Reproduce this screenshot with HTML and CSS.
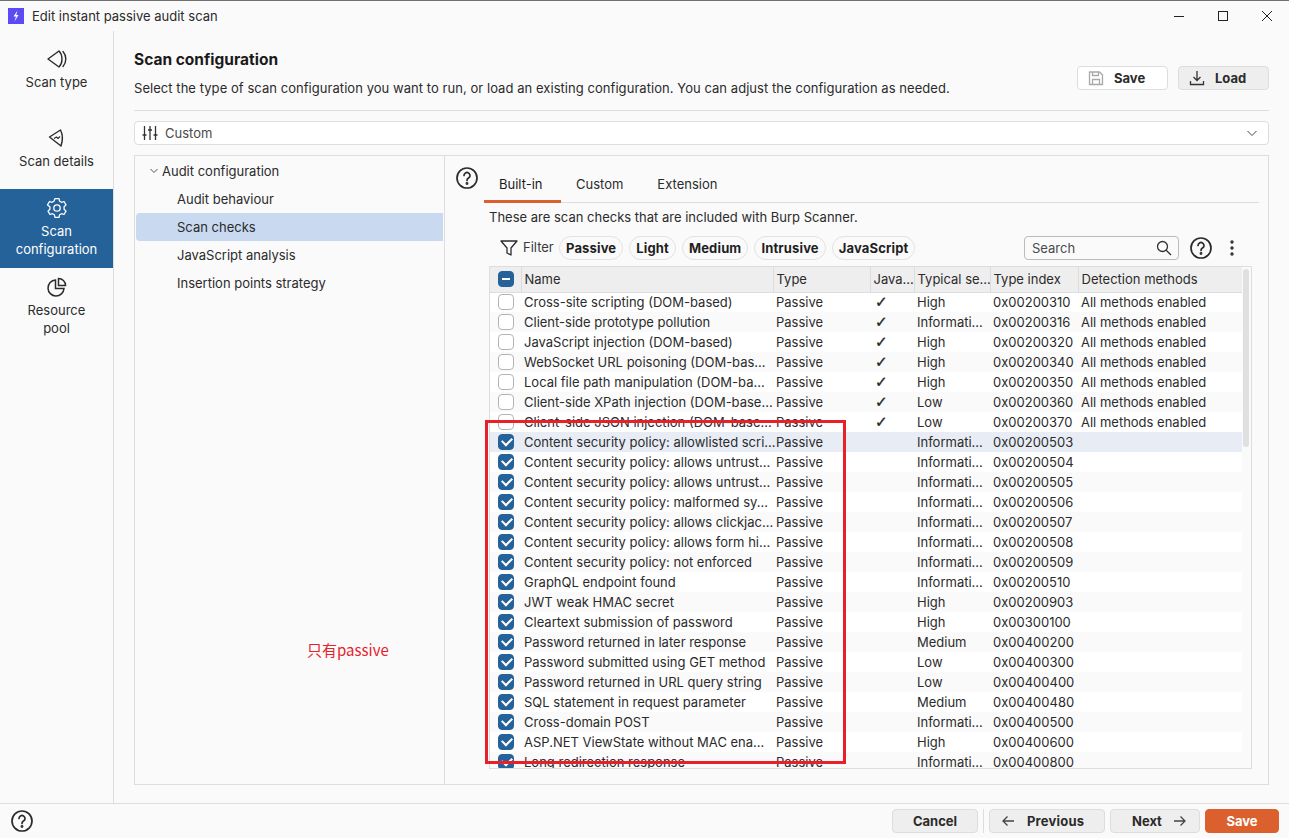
FILE: index.html
```html
<!DOCTYPE html>
<html lang="en">
<head>
  <meta charset="UTF-8">
  <title>Edit instant passive audit scan</title>
  <link rel="stylesheet" href="styles.css">
</head>
<body>

<header class="titlebar">
  <svg class="app-icon" width="16" height="16" viewBox="0 0 16 16"><rect width="16" height="16" fill="#5b4bf5"/><path d="M9.500 2.500 5.500 8.500H8L6.500 13.500 10.500 7H8.200z" fill="#fff"/></svg>
  <span class="title">Edit instant passive audit scan</span>
  <div class="win-controls">
    <svg width="12" height="12" viewBox="0 0 12 12"><path d="M1 6.500h10" stroke="#222" fill="none"/></svg>
    <svg width="12" height="12" viewBox="0 0 12 12"><rect x="1.500" y="1.500" width="9" height="9" stroke="#222" fill="none"/></svg>
    <svg width="12" height="12" viewBox="0 0 12 12"><path d="M1 1l10 10M11 1 1 11" stroke="#222" fill="none"/></svg>
  </div>
</header>

<div class="main">
  <nav class="sidebar">
    <div class="nav-item">
      <svg width="24" height="24" viewBox="0 0 24 24" fill="none" stroke="#2b2b2b" stroke-width="1.400"><path d="M3 12 14 4c2 2 3 5 3 8s-1 6-3 8z" stroke-linejoin="round"/><path d="M18 4.500c1.800 2 2.800 4.800 2.800 7.500s-1 5.500-2.800 7.500" stroke-linecap="round"/></svg>
      <span>Scan type</span>
    </div>
    <div class="nav-item">
      <svg width="24" height="24" viewBox="0 0 24 24" fill="none" stroke="#2b2b2b" stroke-width="1.400" stroke-linejoin="round"><path d="M4.500 11 15.500 4c2 4 2.500 10 .5 16z"/><path d="M9 12.500l2.500-1.500 1.500 1.500 2-2" stroke-width="1.100"/></svg>
      <span>Scan details</span>
    </div>
    <div class="nav-item active">
      <svg width="24" height="24" viewBox="0 0 24 24" fill="none" stroke="#fff" stroke-width="1.300" stroke-linejoin="round"><circle cx="12" cy="12" r="3.200"/><path d="M10 2.600h4l.6 2.600 1.900 1.100 2.500-.8 2 3.400-1.900 1.800v2.600l1.900 1.800-2 3.400-2.500-.8-1.900 1.100-.6 2.600h-4l-.6-2.600-1.900-1.100-2.500.8-2-3.400 1.900-1.800v-2.600L2.500 8.900l2-3.400 2.500.8 1.900-1.100z"/></svg>
      <span>Scan<br>configuration</span>
    </div>
    <div class="nav-item">
      <svg width="24" height="24" viewBox="0 0 24 24" fill="none" stroke="#2b2b2b" stroke-width="1.500"><path d="M10.500 5a8 8 0 1 0 8.500 8.500h-8.500z"/><path d="M13.500 3.500a7 7 0 0 1 7 7h-7z"/></svg>
      <span>Resource<br>pool</span>
    </div>
  </nav>

  <main class="content">
    <div class="head">
      <div class="head-text">
        <h1>Scan configuration</h1>
        <p>Select the type of scan configuration you want to run, or load an existing configuration. You can adjust the configuration as needed.</p>
      </div>
      <div class="head-buttons">
        <button class="btn plain">
          <svg width="16" height="16" viewBox="0 0 16 16" fill="none" stroke="#a8a8a8" stroke-width="1.300"><path d="M1.500 2h10l3 3v9.500h-13z" stroke-linejoin="round"/><path d="M4.500 2v3.500h6V2M4.500 14.500V9.500h7v5"/></svg>
          Save
        </button>
        <button class="btn">
          <svg width="16" height="16" viewBox="0 0 16 16" fill="none" stroke="#333" stroke-width="1.300"><path d="M8 1v9.500M4.500 7 8 10.500 11.500 7M1.500 11v3.500h13V11"/></svg>
          Load
        </button>
      </div>
    </div>

    <div class="combo">
      <svg width="16" height="16" viewBox="0 0 16 16" fill="none" stroke="#333" stroke-width="1.300"><path d="M2.500 1v14M8 1v14M13.500 1v14M.5 10h4M6 5h4M11.500 10h4"/></svg>
      <span>Custom</span>
      <svg class="combo-arrow" width="12" height="12" viewBox="0 0 12 12" fill="none" stroke="#444"><path d="M1.500 4 6 8.500 10.500 4"/></svg>
    </div>

    <div class="panel">
      <div class="tree">
        <div class="tree-row root">
          <svg width="10" height="10" viewBox="0 0 10 10" fill="none" stroke="#555"><path d="M1.500 3 5 6.500 8.500 3"/></svg>
          Audit configuration
        </div>
        <div class="tree-row">Audit behaviour</div>
        <div class="tree-row selected">Scan checks</div>
        <div class="tree-row">JavaScript analysis</div>
        <div class="tree-row">Insertion points strategy</div>
      </div>

      <div class="checks">
        <div class="tabs-row">
          <svg class="help" width="24" height="24" viewBox="0 0 24 24" fill="none" stroke="#2b2b2b" stroke-width="1.700"><circle cx="12" cy="12" r="10"/><path d="M9 9.500a3 3 0 1 1 4.500 2.600c-1 .6-1.500 1.100-1.500 2.400" stroke-linecap="round"/><circle cx="12" cy="17.500" r=".6"/></svg>
          <div class="tabs">
            <div class="tab current">Built-in</div>
            <div class="tab">Custom</div>
            <div class="tab">Extension</div>
          </div>
        </div>
        <p class="note">These are scan checks that are included with Burp Scanner.</p>

        <div class="filters">
          <svg class="funnel" width="18" height="18" viewBox="0 0 18 18" fill="none" stroke="#2b2b2b" stroke-width="1.300" stroke-linejoin="round"><path d="M1 2h16l-6 7v7l-4-2V9z"/></svg>
          <span class="filter-label">Filter</span>
          <span class="pill">Passive</span>
          <span class="pill">Light</span>
          <span class="pill">Medium</span>
          <span class="pill">Intrusive</span>
          <span class="pill">JavaScript</span>
          <div class="search">
            <span>Search</span>
            <svg width="16" height="16" viewBox="0 0 16 16" fill="none" stroke="#333" stroke-width="1.300"><circle cx="6.500" cy="6.500" r="5"/><path d="m10.200 10.200 4.800 4.800"/></svg>
          </div>
          <svg class="help-small" width="24" height="24" viewBox="0 0 24 24" fill="none" stroke="#2b2b2b" stroke-width="1.700"><circle cx="12" cy="12" r="10"/><path d="M9 9.500a3 3 0 1 1 4.500 2.600c-1 .6-1.500 1.100-1.500 2.400" stroke-linecap="round"/><circle cx="12" cy="17.500" r=".6"/></svg>
          <svg class="kebab" width="4" height="16" viewBox="0 0 4 16" fill="#333"><circle cx="2" cy="2" r="1.700"/><circle cx="2" cy="8" r="1.700"/><circle cx="2" cy="14" r="1.700"/></svg>
        </div>

        <div class="table-wrap">
          <table>
            <colgroup>
              <col class="c-check"><col class="c-name"><col class="c-type"><col class="c-java"><col class="c-sev"><col class="c-index"><col>
            </colgroup>
            <thead>
              <tr><th><span class="cb mixed"></span></th><th>Name</th><th>Type</th><th>Java...</th><th>Typical se...</th><th>Type index</th><th>Detection methods</th></tr>
            </thead>
            <tbody>
              <tr><td><span class="cb"></span></td><td>Cross-site scripting (DOM-based)</td><td>Passive</td><td class="tick">✓</td><td>High</td><td>0x00200310</td><td>All methods enabled</td></tr>
              <tr><td><span class="cb"></span></td><td>Client-side prototype pollution</td><td>Passive</td><td class="tick">✓</td><td>Informati...</td><td>0x00200316</td><td>All methods enabled</td></tr>
              <tr><td><span class="cb"></span></td><td>JavaScript injection (DOM-based)</td><td>Passive</td><td class="tick">✓</td><td>High</td><td>0x00200320</td><td>All methods enabled</td></tr>
              <tr><td><span class="cb"></span></td><td>WebSocket URL poisoning (DOM-bas...</td><td>Passive</td><td class="tick">✓</td><td>High</td><td>0x00200340</td><td>All methods enabled</td></tr>
              <tr><td><span class="cb"></span></td><td>Local file path manipulation (DOM-ba...</td><td>Passive</td><td class="tick">✓</td><td>High</td><td>0x00200350</td><td>All methods enabled</td></tr>
              <tr><td><span class="cb"></span></td><td>Client-side XPath injection (DOM-base...</td><td>Passive</td><td class="tick">✓</td><td>Low</td><td>0x00200360</td><td>All methods enabled</td></tr>
              <tr><td><span class="cb"></span></td><td>Client-side JSON injection (DOM-base...</td><td>Passive</td><td class="tick">✓</td><td>Low</td><td>0x00200370</td><td>All methods enabled</td></tr>
              <tr class="hl"><td><span class="cb on"></span></td><td>Content security policy: allowlisted scri...</td><td>Passive</td><td></td><td>Informati...</td><td>0x00200503</td><td></td></tr>
              <tr><td><span class="cb on"></span></td><td>Content security policy: allows untrust...</td><td>Passive</td><td></td><td>Informati...</td><td>0x00200504</td><td></td></tr>
              <tr><td><span class="cb on"></span></td><td>Content security policy: allows untrust...</td><td>Passive</td><td></td><td>Informati...</td><td>0x00200505</td><td></td></tr>
              <tr><td><span class="cb on"></span></td><td>Content security policy: malformed sy...</td><td>Passive</td><td></td><td>Informati...</td><td>0x00200506</td><td></td></tr>
              <tr><td><span class="cb on"></span></td><td>Content security policy: allows clickjac...</td><td>Passive</td><td></td><td>Informati...</td><td>0x00200507</td><td></td></tr>
              <tr><td><span class="cb on"></span></td><td>Content security policy: allows form hi...</td><td>Passive</td><td></td><td>Informati...</td><td>0x00200508</td><td></td></tr>
              <tr><td><span class="cb on"></span></td><td>Content security policy: not enforced</td><td>Passive</td><td></td><td>Informati...</td><td>0x00200509</td><td></td></tr>
              <tr><td><span class="cb on"></span></td><td>GraphQL endpoint found</td><td>Passive</td><td></td><td>Informati...</td><td>0x00200510</td><td></td></tr>
              <tr><td><span class="cb on"></span></td><td>JWT weak HMAC secret</td><td>Passive</td><td></td><td>High</td><td>0x00200903</td><td></td></tr>
              <tr><td><span class="cb on"></span></td><td>Cleartext submission of password</td><td>Passive</td><td></td><td>High</td><td>0x00300100</td><td></td></tr>
              <tr><td><span class="cb on"></span></td><td>Password returned in later response</td><td>Passive</td><td></td><td>Medium</td><td>0x00400200</td><td></td></tr>
              <tr><td><span class="cb on"></span></td><td>Password submitted using GET method</td><td>Passive</td><td></td><td>Low</td><td>0x00400300</td><td></td></tr>
              <tr><td><span class="cb on"></span></td><td>Password returned in URL query string</td><td>Passive</td><td></td><td>Low</td><td>0x00400400</td><td></td></tr>
              <tr><td><span class="cb on"></span></td><td>SQL statement in request parameter</td><td>Passive</td><td></td><td>Medium</td><td>0x00400480</td><td></td></tr>
              <tr><td><span class="cb on"></span></td><td>Cross-domain POST</td><td>Passive</td><td></td><td>Informati...</td><td>0x00400500</td><td></td></tr>
              <tr><td><span class="cb on"></span></td><td>ASP.NET ViewState without MAC ena...</td><td>Passive</td><td></td><td>High</td><td>0x00400600</td><td></td></tr>
              <tr><td><span class="cb on"></span></td><td>Long redirection response</td><td>Passive</td><td></td><td>Informati...</td><td>0x00400800</td><td></td></tr>
            </tbody>
          </table>
          <div class="scrollbar"></div>
        </div>
      </div>
    </div>
  </main>
</div>

<footer class="footer">
  <svg class="help" width="24" height="24" viewBox="0 0 24 24" fill="none" stroke="#2b2b2b" stroke-width="1.700"><circle cx="12" cy="12" r="10"/><path d="M9 9.500a3 3 0 1 1 4.500 2.600c-1 .6-1.500 1.100-1.500 2.400" stroke-linecap="round"/><circle cx="12" cy="17.500" r=".6"/></svg>
  <div class="foot-buttons">
    <button class="btn cancel">Cancel</button>
    <span class="foot-sep"></span>
    <button class="btn prev">
      <svg width="14" height="14" viewBox="0 0 14 14" fill="none" stroke="#444" stroke-width="1.300"><path d="M13 7H2M6.500 2.500 2 7l4.500 4.500"/></svg>
      Previous
    </button>
    <button class="btn next">
      Next
      <svg width="14" height="14" viewBox="0 0 14 14" fill="none" stroke="#444" stroke-width="1.300"><path d="M1 7h11M7.500 2.500 12 7l-4.500 4.500"/></svg>
    </button>
    <button class="btn primary">Save</button>
  </div>
</footer>

<!-- red markup drawn over the screenshot -->
<div class="mark-box"></div>
<div class="mark-text">只有passive</div>

</body>
</html>
```

FILE: styles.css
```css
* {
  box-sizing: border-box;
}

html, body {
  height: 100%;
}

body {
  margin: 0;
  display: flex;
  flex-direction: column;
  height: 838px;
  overflow: hidden;
  position: relative;
  background: #fafafa;
  color: #2b2b2b;
  font-family: Inter, "Noto Sans", sans-serif;
  font-size: 13px;
  border-top: 1px solid #707070;
}

.titlebar {
  display: flex;
  align-items: center;
  height: 30px;
  padding-left: 8px;
  flex: none;
}

.title {
  margin-left: 8px;
}

.win-controls {
  display: flex;
  gap: 32px;
  margin-left: auto;
  padding-right: 16px;
}

.main {
  flex: 1;
  display: flex;
  min-height: 0;
}

.sidebar {
  width: 114px;
  flex: none;
  border-right: 1px solid #dddddd;
}

.nav-item {
  height: 79px;
  padding-bottom: 3px;
  display: flex;
  flex-direction: column;
  align-items: center;
  justify-content: center;
  text-align: center;
  line-height: 18px;
}

.nav-item svg {
  margin-bottom: 2px;
}

.nav-item.active {
  background: #256299;
  color: #fff;
}

.content {
  flex: 1;
  min-width: 0;
  padding: 0 20px 18px;
  display: flex;
  flex-direction: column;
}

.head {
  display: flex;
  justify-content: space-between;
  height: 80px;
  border-bottom: 1px solid #dddddd;
}

h1 {
  margin: 19px 0 0;
  font-size: 15.500px;
  line-height: 20px;
  font-weight: 700;
  color: #1a1a1a;
}

.head-text p {
  margin: 8px 0 0;
  line-height: 20px;
  letter-spacing: .05px;
}

.head-buttons {
  display: flex;
  gap: 10px;
  padding-top: 35px;
}

.btn {
  display: flex;
  align-items: center;
  justify-content: center;
  gap: 12px;
  height: 24px;
  padding: 0;
  border: 1px solid #dddddd;
  border-radius: 4px;
  background: #eeeeee;
  color: #2b2b2b;
  font-family: inherit;
  font-size: 13px;
  font-weight: 700;
}

.head-buttons .btn {
  width: 91px;
  justify-content: flex-start;
  padding-left: 10px;
  gap: 10px;
}

.btn.plain {
  background: #fff;
}

.combo {
  display: flex;
  align-items: center;
  gap: 7px;
  height: 24px;
  margin-top: 10px;
  padding: 0 10px 0 7px;
  background: #fff;
  border: 1px solid #dddddd;
  border-radius: 4px;
  color: #4a4a4a;
}

.combo-arrow {
  margin-left: auto;
}

.panel {
  flex: 1;
  min-height: 0;
  display: flex;
  margin-top: 10px;
  border: 1px solid #dddddd;
}

.tree {
  width: 310px;
  flex: none;
  padding: 1px 1px;
  border-right: 1px solid #dddddd;
}

.tree-row {
  display: flex;
  align-items: center;
  height: 28px;
  padding-left: 41px;
  border-radius: 4px 0 0 4px;
}

.tree-row.root {
  padding-left: 13px;
  gap: 3px;
}

.tree-row.selected {
  background: #c8d9f0;
}

.checks {
  flex: 1;
  min-width: 0;
  display: flex;
  flex-direction: column;
  padding: 0 9px 15px 10px;
}

.tabs-row {
  display: flex;
  align-items: flex-start;
  height: 47px;
  flex: none;
}

.help {
  flex: none;
  margin-top: 10px;
}

.tabs {
  flex: 1;
  display: flex;
  height: 47px;
  margin-left: 5px;
  border-bottom: 1px solid #dddddd;
}

.tab {
  height: 47px;
  padding: 19px 15px 0;
  line-height: 18px;
  margin-right: 4px;
}

.tab.current {
  width: 77px;
  margin-right: 0;
  border-bottom: 3px solid #dc602e;
  color: #1a1a1a;
}

.note {
  margin: 4px 0 0 34px;
  line-height: 20px;
}

.filters {
  display: flex;
  align-items: center;
  height: 24px;
  margin: 9px 7px 0 34px;
  gap: 6px;
  flex: none;
}

.funnel {
  margin-left: 11px;
}

.filter-label {
  margin: -2px 0 0 -1px;
  width: 30px;
  color: #3a3a3a;
}

.pill {
  height: 24px;
  padding: 0 6px;
  line-height: 22px;
  border: 1px solid #e2e2e2;
  border-radius: 12px;
  font-weight: 700;
  letter-spacing: .15px;
  color: #1f1f1f;
}

.search {
  display: flex;
  align-items: center;
  justify-content: space-between;
  width: 155px;
  height: 24px;
  margin-left: auto;
  padding: 0 6px 0 7px;
  background: #fafafa;
  border: 1px solid #bbbbbb;
  border-radius: 4px;
  color: #4a4a4a;
}

.help-small {
  margin-left: 4px;
}

.kebab {
  margin: 0 18px 0 11px;
}

.table-wrap {
  flex: 1;
  min-height: 0;
  margin: 6px 7px 0 34px;
  overflow: hidden;
  position: relative;
  border: 1px solid #dddddd;
  padding-right: 9px;
  background: #fafafa;
}

table {
  width: 100%;
  table-layout: fixed;
  border-collapse: collapse;
}

.c-check { width: 31px; }
.c-name { width: 252px; }
.c-type { width: 97px; }
.c-java { width: 44px; }
.c-sev { width: 76px; }
.c-index { width: 88px; }

th {
  height: 25px;
  padding: 0 3px 1px;
  text-align: left;
  font-weight: 400;
  background: #eeeeee;
  border-right: 1px solid #dddddd;
  border-bottom: 1px solid #dddddd;
  white-space: nowrap;
  overflow: hidden;
}

th:first-child {
  padding-left: 8px;
}

th:last-child {
  border-right: 0;
}

td {
  height: 20px;
  padding: 0 0 0 3px;
  white-space: nowrap;
}

td:first-child {
  padding-left: 8px;
}

tbody tr:nth-child(odd) {
  background: #ffffff;
}

tbody tr:nth-child(even) {
  background: #fafafa;
}

tbody tr.hl {
  background: #e8edf5;
}

td.tick {
  padding-left: 5px;
  font-family: "DejaVu Sans", sans-serif;
  font-size: 15px;
  line-height: 14px;
  -webkit-text-stroke: .4px #2b2b2b;
}

.cb {
  display: block;
  position: relative;
  width: 16px;
  height: 16px;
  background: #fff;
  border: 1px solid #b4b4b4;
  border-radius: 4px;
}

.cb.on, .cb.mixed {
  background: #256299;
  border-color: #256299;
}

.cb.on::after {
  content: "";
  position: absolute;
  left: 3px;
  top: 2px;
  width: 8px;
  height: 5px;
  border-left: 2px solid #fff;
  border-bottom: 2px solid #fff;
  transform: rotate(-45deg);
}

.cb.mixed::after {
  content: "";
  position: absolute;
  left: 3px;
  top: 6px;
  width: 8px;
  height: 2px;
  background: #fff;
}

.scrollbar {
  position: absolute;
  top: 2px;
  right: 2px;
  width: 6px;
  height: 178px;
  background: #e0e0e0;
  border-radius: 3px;
}

.footer {
  display: flex;
  align-items: center;
  justify-content: space-between;
  height: 35px;
  flex: none;
  padding: 0 10px;
  border-top: 1px solid #dddddd;
}

.footer .help {
  margin: 0;
}

.foot-buttons {
  display: flex;
  align-items: center;
  gap: 5px;
}

.cancel { width: 86px; }

.btn.prev {
  width: 116px;
  justify-content: flex-start;
  padding-left: 11px;
  letter-spacing: .2px;
}

.btn.next {
  width: 90px;
  justify-content: flex-start;
  padding-left: 21px;
  gap: 11px;
}

.foot-sep {
  width: 1px;
  height: 24px;
  background: #dddddd;
}

.btn.primary {
  width: 74px;
  background: #dc602e;
  border-color: #dc602e;
  color: #fff;
}

.mark-box {
  position: absolute;
  left: 485px;
  top: 419px;
  width: 361px;
  height: 344px;
  border: 3px solid #e8202a;
}

.mark-text {
  position: absolute;
  left: 307px;
  top: 639px;
  color: #e8202a;
  font-family: "Noto Sans CJK SC", "Noto Sans", sans-serif;
  font-size: 15px;
  line-height: 20px;
}
```
